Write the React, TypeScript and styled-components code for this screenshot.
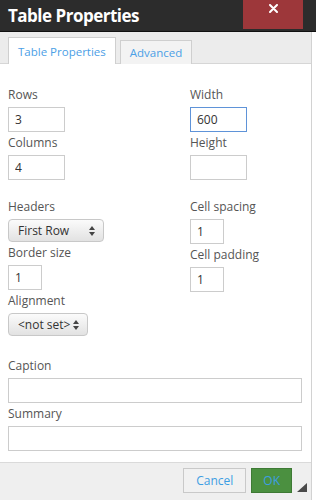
import React from 'react';
import styled, { createGlobalStyle } from 'styled-components';

const GlobalStyle = createGlobalStyle`
  html, body {
    margin: 0;
    padding: 0;
    background: #ffffff;
  }
  body {
    font-family: 'Open Sans', 'Liberation Sans', sans-serif;
  }
`;

const Dialog = styled.div`
  width: 316px;
  height: 500px;
  display: flex;
  flex-direction: column;
  overflow: hidden;
`;

const Header = styled.header`
  height: 31px;
  flex: none;
  display: flex;
  justify-content: space-between;
  align-items: flex-start;
  background: #2c2c2c;
  border-bottom: 1px solid #111;
`;

const Title = styled.h1`
  margin: 0;
  padding-left: 8px;
  font-size: 17px;
  line-height: 32px;
  font-weight: 700;
  letter-spacing: -0.5px;
  color: #ffffff;
`;

const CloseButton = styled.button`
  width: 60px;
  height: 29px;
  margin-right: 13px;
  border: none;
  padding: 4px 0 0;
  background: #9d373a;
  display: flex;
  justify-content: center;
  align-items: flex-start;
`;

const Panel = styled.div`
  flex: 1;
  width: 311px;
  display: flex;
  flex-direction: column;
  border-right: 1px solid #d2d2d2;
`;

const TabBar = styled.div`
  height: 31px;
  flex: none;
  display: flex;
  align-items: flex-end;
  gap: 4px;
  padding-left: 8px;
  background: #ececec;
  border-bottom: 1px solid #d6d6d6;
`;

type TabProps = {
  active?: boolean;
};

const Tab = styled.div<TabProps>`
  height: ${(p) => (p.active ? '27px' : '25px')};
  margin-bottom: ${(p) => (p.active ? '-1px' : '-2px')};
  padding: 0 9px;
  box-sizing: border-box;
  display: flex;
  align-items: center;
  font-size: 11.5px;
  color: #4ba0e6;
  background: ${(p) => (p.active ? '#ffffff' : '#f3f3f3')};
  border: 1px solid #cfcfcf;
  border-bottom: ${(p) => (p.active ? 'none' : '1px solid #cfcfcf')};
`;

const Body = styled.div`
  flex: 1;
  padding: 20px 9px 0 8px;
  background: #ffffff;
`;

const Columns = styled.div`
  display: grid;
  grid-template-columns: 182px 1fr;
`;

type SectionProps = {
  gap: number;
};

const Section = styled.div<SectionProps>`
  margin-top: ${(p) => p.gap}px;
`;

const Field = styled.div`
  display: flex;
  flex-direction: column;
  align-items: flex-start;
`;

const Label = styled.label`
  font-size: 12px;
  line-height: 23px;
  height: 23px;
  margin-top: -1px;
  margin-bottom: 1px;
  color: #555555;
`;

type InputProps = {
  w: number;
  focused?: boolean;
};

const TextInput = styled.input<InputProps>`
  width: ${(p) => p.w}px;
  height: 25px;
  box-sizing: border-box;
  padding: 0 6px;
  border: 1px solid ${(p) => (p.focused ? '#5f93d8' : '#cccccc')};
  background: #ffffff;
  font-family: 'Open Sans', 'Liberation Sans', sans-serif;
  font-size: 12px;
  color: #333333;
  outline: none;
`;

type SelectProps = {
  w: number;
};

const SelectBox = styled.div<SelectProps>`
  width: ${(p) => p.w}px;
  height: 23px;
  box-sizing: border-box;
  padding: 0 8px 0 9px;
  display: flex;
  align-items: center;
  justify-content: space-between;
  border: 1px solid #c8c8c8;
  border-radius: 4px;
  background: linear-gradient(#fbfbfb, #e2e2e2);
  font-size: 12px;
  color: #333333;
`;

const Footer = styled.footer`
  height: 38px;
  flex: none;
  position: relative;
  display: flex;
  justify-content: flex-end;
  align-items: flex-start;
  gap: 5px;
  padding: 5px 19px 0 0;
  box-sizing: border-box;
  background: #efefef;
  border-top: 1px solid #dadada;
`;

type ButtonProps = {
  primary?: boolean;
};

const Button = styled.button<ButtonProps>`
  height: 25px;
  padding: 0 ${(p) => (p.primary ? '11px' : '12px')};
  border: 1px solid ${(p) => (p.primary ? '#3e7a35' : '#c9c9c9')};
  background: ${(p) => (p.primary ? '#4b9040' : '#f1f1f1')};
  font-family: 'Open Sans', 'Liberation Sans', sans-serif;
  font-size: 12px;
  color: #3d9ee3;
`;

const Grip = styled.svg`
  position: absolute;
  right: 4px;
  bottom: 8px;
`;

const SelectArrows = () => (
  <svg width="6" height="10" viewBox="0 0 6 10">
    <path d="M3 0 L6 4 H0 Z" fill="#444" />
    <path d="M3 10 L6 6 H0 Z" fill="#444" />
  </svg>
);

const App = () => (
  <Dialog>
    <GlobalStyle />
    <Header>
      <Title>Table Properties</Title>
      <CloseButton aria-label="Close">
        <svg width="9" height="9" viewBox="0 0 9 9">
          <path d="M1 1 L8 8 M8 1 L1 8" stroke="#ffffff" strokeWidth="2" strokeLinecap="round" />
        </svg>
      </CloseButton>
    </Header>
    <Panel>
      <TabBar>
        <Tab active>Table Properties</Tab>
        <Tab>Advanced</Tab>
      </TabBar>
      <Body>
        <Columns>
          <div>
            <Field>
              <Label>Rows</Label>
              <TextInput w={57} defaultValue="3" />
            </Field>
            <Field>
              <Label>Columns</Label>
              <TextInput w={57} defaultValue="4" />
            </Field>
          </div>
          <div>
            <Field>
              <Label>Width</Label>
              <TextInput w={57} focused defaultValue="600" />
            </Field>
            <Field>
              <Label>Height</Label>
              <TextInput w={57} />
            </Field>
          </div>
        </Columns>
        <Section gap={16}>
          <Columns>
            <div>
              <Field>
                <Label>Headers</Label>
                <SelectBox w={96}>
                  First Row
                  <SelectArrows />
                </SelectBox>
              </Field>
              <Field>
                <Label>Border size</Label>
                <TextInput w={34} defaultValue="1" />
              </Field>
              <Field>
                <Label>Alignment</Label>
                <SelectBox w={80}>
                  &lt;not set&gt;
                  <SelectArrows />
                </SelectBox>
              </Field>
            </div>
            <div>
              <Field>
                <Label>Cell spacing</Label>
                <TextInput w={34} defaultValue="1" />
              </Field>
              <Field>
                <Label>Cell padding</Label>
                <TextInput w={34} defaultValue="1" />
              </Field>
            </div>
          </Columns>
        </Section>
        <Section gap={19}>
          <Field>
            <Label>Caption</Label>
            <TextInput w={294} />
          </Field>
          <Field>
            <Label>Summary</Label>
            <TextInput w={294} />
          </Field>
        </Section>
      </Body>
      <Footer>
        <Button>Cancel</Button>
        <Button primary>OK</Button>
        <Grip width="10" height="9" viewBox="0 0 10 9">
          <path d="M10 0 V9 H0 Z" fill="#4a4a4a" />
        </Grip>
      </Footer>
    </Panel>
  </Dialog>
);

export default App;
